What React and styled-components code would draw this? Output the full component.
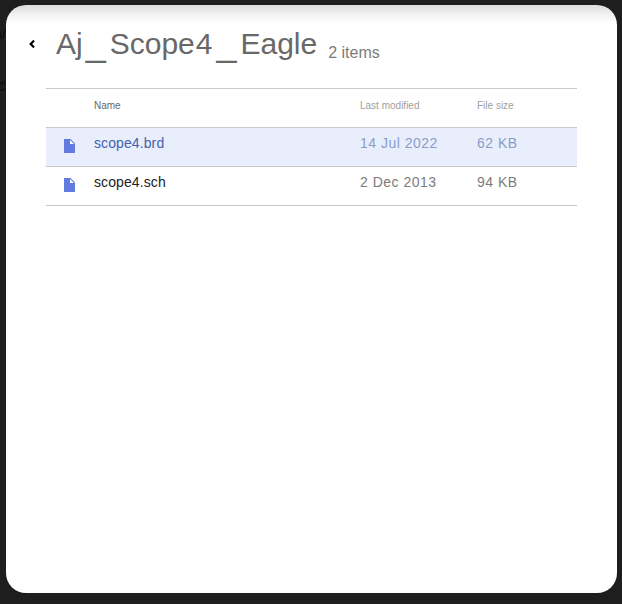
import React from "react";
import styled, { createGlobalStyle } from "styled-components";

const GlobalStyle = createGlobalStyle`
  * {
    box-sizing: border-box;
  }

  body {
    margin: 0;
    background: #1e1e1e;
    font-family: "Liberation Sans", Arial, sans-serif;
  }
`;

const Page = styled.div`
  position: relative;
  height: 604px;
  padding: 5px 5px 11px 6px;
  overflow: hidden;
`;

// text of the page underneath, peeking out at the left edge
const Behind = styled.span`
  position: absolute;
  left: -2px;
  top: ${({ $top }) => $top}px;
  font-size: 16px;
  line-height: 16px;
  color: #0c0c0c;
`;

const Panel = styled.main`
  position: relative;
  height: 100%;
  padding: 0 40px;
  border-radius: 20px;
  background: linear-gradient(#dcdcdc, #f1f1f1 9px, #fff 18px) #fff;
`;

const Header = styled.header`
  display: flex;
  align-items: baseline;
  height: 83px;
  margin-left: -22px;
  padding-top: 19px;
`;

const BackButton = styled.button`
  display: flex;
  width: 32px;
  padding: 0 0 0 5px;
  border: 0;
  background: none;
  align-self: flex-start;
  margin-top: 16px;
  cursor: pointer;
`;

const Title = styled.h1`
  display: flex;
  align-items: baseline;
  margin: 0;
  font-size: 30px;
  line-height: 36px;
  font-weight: 400;
  color: #686868;
`;

const Underscore = styled.span`
  width: 20px;
  margin: 0 4px 0 3px;
  font-size: 36px;
  line-height: 36px;
  transform: translateY(2px);
`;

const Digit = styled.span`
  margin: 0 1px 0 1px;
`;

const Count = styled.span`
  margin-left: 11px;
  font-size: 16px;
  color: #7c7c7c;
  transform: translateY(4px);
`;

const Row = styled.div`
  display: grid;
  grid-template-columns: 48px 266px 117px 1fr;
  height: 39px;
  padding-top: 7px;
  border-top: 1px solid #c8c8c8;
  font-size: 14px;
  line-height: 16px;
  color: ${({ $selected }) => ($selected ? "#4562ae" : "#222")};
  background: ${({ $selected }) => ($selected ? "#e8eefb" : "transparent")};

  &:last-child {
    height: 40px;
    border-bottom: 1px solid #c8c8c8;
  }
`;

const HeadRow = styled(Row)`
  padding-top: 9px;
  font-size: 10px;
`;

const HeadCell = styled.span`
  color: ${({ $muted }) => ($muted ? "#a0a0a0" : "#666")};
`;

const IconCell = styled.span`
  padding: 4px 0 0 18px;
  line-height: 0;
`;

const Name = styled.span`
  letter-spacing: 0.1px;
`;

const Meta = styled.span`
  letter-spacing: 0.5px;
  color: ${({ $selected }) => ($selected ? "#8a9dca" : "#7c7c7c")};
`;

const FileIcon = () => (
  <svg width="11" height="14" viewBox="0 0 11 14">
    <path d="M0 0h6.5L11 4.5V14H0z" fill="#627be0" />
    <path d="M6 1v4h4z" fill="#fff" />
  </svg>
);

const files = [
  { name: "scope4.brd", modified: "14 Jul 2022", size: "62 KB", selected: true },
  { name: "scope4.sch", modified: "2 Dec 2013", size: "94 KB", selected: false },
];

const App = () => {
  return (
    <>
      <GlobalStyle />
      <Page>
        <Behind $top={26}>v</Behind>
        <Behind $top={78}>c</Behind>
        <Panel>
          <Header>
            <BackButton aria-label="Back">
              <svg width="6" height="8" viewBox="0 0 6 8">
                <path d="M5 0.6L1.7 4L5 7.4" fill="none" stroke="#000" strokeWidth="2.2" />
              </svg>
            </BackButton>
            <Title>
              Aj<Underscore>_</Underscore>Scope<Digit>4</Digit>
              <Underscore>_</Underscore>Eagle
            </Title>
            <Count>2 items</Count>
          </Header>

          <HeadRow>
            <span />
            <HeadCell>Name</HeadCell>
            <HeadCell $muted>Last modified</HeadCell>
            <HeadCell $muted>File size</HeadCell>
          </HeadRow>
          {files.map(({ name, modified, size, selected }) => (
            <Row key={name} $selected={selected}>
              <IconCell><FileIcon /></IconCell>
              <Name>{name}</Name>
              <Meta $selected={selected}>{modified}</Meta>
              <Meta $selected={selected}>{size}</Meta>
            </Row>
          ))}
        </Panel>
      </Page>
    </>
  );
};

export default App;
